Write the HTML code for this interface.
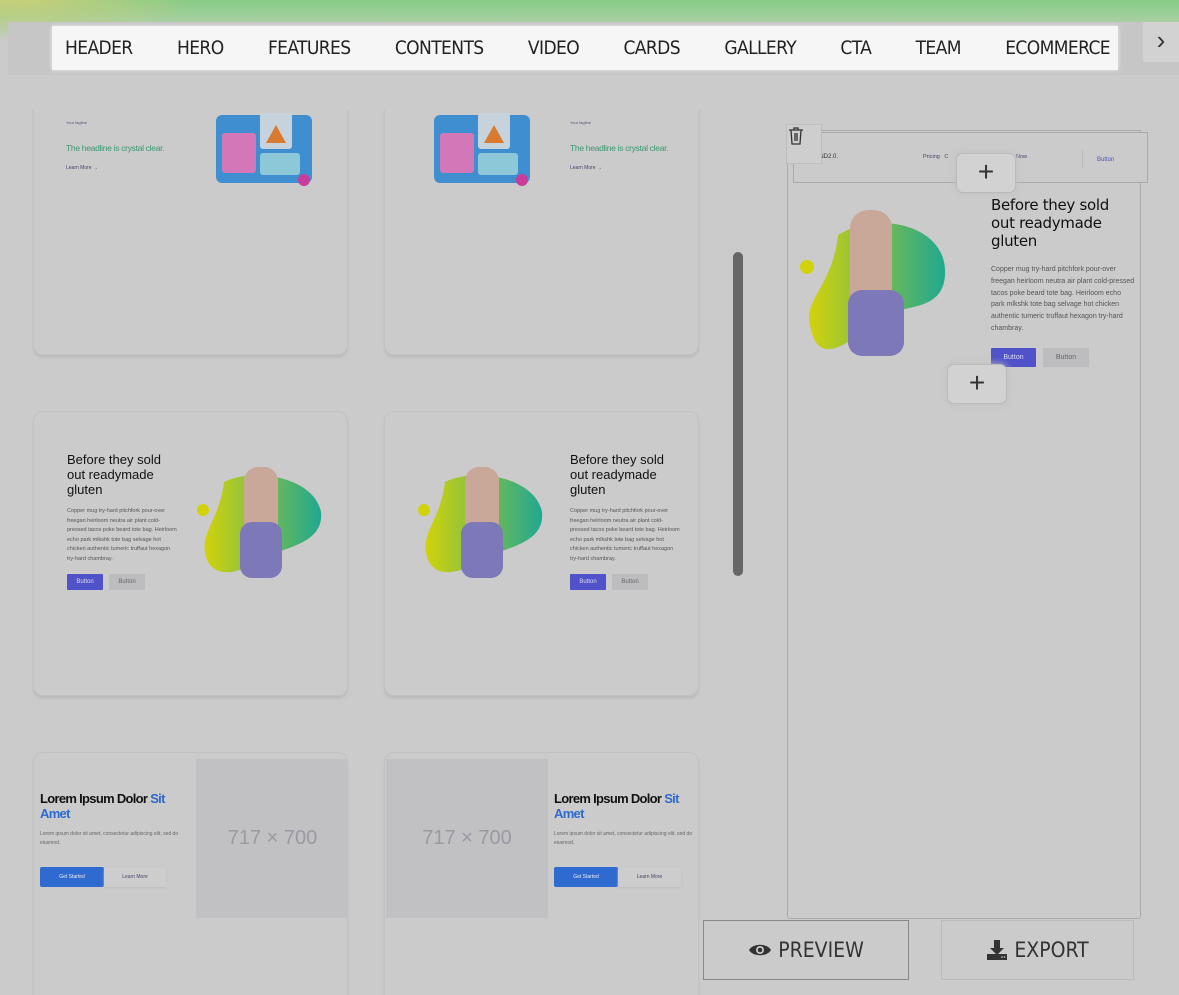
<!DOCTYPE html>
<html style="width:1179px;height:995px;overflow:hidden"><head><meta charset="utf-8"><style>
*{box-sizing:border-box;margin:0;padding:0}
body{width:1179px;height:995px;overflow:hidden;background:#cbcbcb;font-family:"Liberation Sans",sans-serif;position:relative}
.abs{position:absolute}
.top{left:0;top:0;width:1179px;height:40px;background:linear-gradient(180deg,#86cb86 0%,#9fcf9a 40%,#cbcbcb 100%)}
.topl{left:0;top:0;width:200px;height:40px;background:radial-gradient(ellipse at 10% 0%,#c8cf7a,rgba(200,207,122,0) 70%)}
.strip{left:8px;top:22px;width:1171px;height:53px;background:#c6c6c6}
.nav{left:52px;top:26px;width:1066px;height:44px;background:#f6f6f6;box-shadow:0 0 4px #eee;display:flex;align-items:center;justify-content:space-between;padding:0 8px 0 13px;font-size:19px;color:#222;font-family:"DejaVu Sans Condensed","Liberation Sans Narrow",sans-serif;letter-spacing:-0.6px}
.arrow{left:1143px;top:22px;width:36px;height:40px;background:#d2d2d2;color:#333;font-size:26px;text-align:center;line-height:36px}
.clip{left:0;top:110px;width:720px;height:885px;overflow:hidden}
.card{background:#cbcbcb;border:1px solid #c2c2c2;border-radius:10px;box-shadow:0 3px 2px #bdbdbd;overflow:hidden}
.h{color:#111;font-size:13px;line-height:15px}
.p{color:#555;font-size:5.5px;line-height:9.5px}
.btn1{background:#4f52c8;color:#dde;font-size:6px;text-align:center;line-height:16px;width:36px;height:16px;border-radius:1px}
.btn2{background:#bdbdc0;color:#666;font-size:6px;text-align:center;line-height:16px;width:36px;height:16px}
.ph{background:#c1c1c3;color:#999aa2;font-size:20px;display:flex;align-items:center;justify-content:center}
.plus{width:60px;height:40px;background:#d2d2d2;border:1px solid #bbb;border-radius:7px;box-shadow:0 0 8px #bfbfbf;text-align:center;line-height:36px;font-size:28px;color:#333;font-weight:300}
.bb{border:1px solid #888;font-size:21px;color:#333;display:flex;align-items:center;justify-content:center;gap:6px;font-family:"DejaVu Sans Condensed",sans-serif}
</style></head><body>
<div class="abs top"></div><div class="abs topl"></div>
<div class="abs strip"></div>
<div class="abs nav"><span>HEADER</span><span>HERO</span><span>FEATURES</span><span>CONTENTS</span><span>VIDEO</span><span>CARDS</span><span>GALLERY</span><span>CTA</span><span>TEAM</span><span>ECOMMERCE</span></div>
<div class="abs arrow">›</div>

<svg width="0" height="0" style="position:absolute"><defs><linearGradient id="g" x1="0" x2="1"><stop offset="0" stop-color="#d2d20a"/><stop offset="1" stop-color="#20a890"/></linearGradient></defs></svg>

<div class="abs clip">
<!-- row1 (offset -110) -->
<div class="abs card" style="left:33px;top:-50px;width:315px;height:295px">
 <div class="abs" style="left:32px;top:59px;font-size:4px;color:#557">Your tagline</div>
 <div class="abs" style="left:32px;top:82px;font-size:8.5px;color:#3a9a70;letter-spacing:-0.3px">The headline is crystal clear.</div>
 <div class="abs" style="left:32px;top:104px;font-size:5px;color:#446">Learn More →</div>
 <svg class="abs" style="left:168px;top:50px" width="112" height="80"><rect x="14" y="4" width="96" height="68" rx="6" fill="#3f8fd0"/><rect x="20" y="22" width="34" height="40" rx="3" fill="#d278b8"/><rect x="58" y="2" width="32" height="36" rx="3" fill="#c7d3dc"/><polygon points="64,32 74,14 84,32" fill="#d87a30"/><rect x="58" y="42" width="40" height="22" rx="3" fill="#8cc8d8"/><circle cx="102" cy="69" r="6" fill="#c83c9c"/></svg>
</div>
<div class="abs card" style="left:384px;top:-50px;width:315px;height:295px">
 <svg class="abs" style="left:35px;top:50px" width="112" height="80"><rect x="14" y="4" width="96" height="68" rx="6" fill="#3f8fd0"/><rect x="20" y="22" width="34" height="40" rx="3" fill="#d278b8"/><rect x="58" y="2" width="32" height="36" rx="3" fill="#c7d3dc"/><polygon points="64,32 74,14 84,32" fill="#d87a30"/><rect x="58" y="42" width="40" height="22" rx="3" fill="#8cc8d8"/><circle cx="102" cy="69" r="6" fill="#c83c9c"/></svg>
 <div class="abs" style="left:185px;top:59px;font-size:4px;color:#557">Your tagline</div>
 <div class="abs" style="left:185px;top:82px;font-size:8.5px;color:#3a9a70;letter-spacing:-0.3px">The headline is crystal clear.</div>
 <div class="abs" style="left:185px;top:104px;font-size:5px;color:#446">Learn More →</div>
</div>

<!-- row2 -->
<div class="abs card" style="left:33px;top:301px;width:315px;height:285px">
 <div class="abs h" style="left:33px;top:40px;width:110px">Before they sold out readymade gluten</div>
 <div class="abs p" style="left:33px;top:95px;width:112px">Copper mug try-hard pitchfork pour-over freegan heirloom neutra air plant cold-pressed tacos poke beard tote bag. Heirloom echo park mlkshk tote bag selvage hot chicken authentic tumeric truffaut hexagon try-hard chambray.</div>
 <div class="abs btn1" style="left:33px;top:162px">Button</div><div class="abs btn2" style="left:75px;top:162px">Button</div>
 <svg class="abs" style="left:160px;top:50px" width="130" height="120"><circle cx="9" cy="48" r="6" fill="#d2d20a"/><path d="M30 20 C60 5 120 15 127 50 C130 80 95 85 70 95 C50 110 20 120 12 95 C5 70 25 60 30 20Z" fill="url(#g)"/><rect x="50" y="5" width="34" height="80" rx="14" fill="#c9a89a"/><rect x="46" y="60" width="42" height="56" rx="12" fill="#7d78b8"/></svg>
</div>
<div class="abs card" style="left:384px;top:301px;width:315px;height:285px">
 <svg class="abs" style="left:30px;top:50px" width="130" height="120"><circle cx="9" cy="48" r="6" fill="#d2d20a"/><path d="M30 20 C60 5 120 15 127 50 C130 80 95 85 70 95 C50 110 20 120 12 95 C5 70 25 60 30 20Z" fill="url(#g)"/><rect x="50" y="5" width="34" height="80" rx="14" fill="#c9a89a"/><rect x="46" y="60" width="42" height="56" rx="12" fill="#7d78b8"/></svg>
 <div class="abs h" style="left:185px;top:40px;width:110px">Before they sold out readymade gluten</div>
 <div class="abs p" style="left:185px;top:95px;width:112px">Copper mug try-hard pitchfork pour-over freegan heirloom neutra air plant cold-pressed tacos poke beard tote bag. Heirloom echo park mlkshk tote bag selvage hot chicken authentic tumeric truffaut hexagon try-hard chambray.</div>
 <div class="abs btn1" style="left:185px;top:162px">Button</div><div class="abs btn2" style="left:227px;top:162px">Button</div>
</div>

<!-- row3 -->
<div class="abs card" style="left:33px;top:642px;width:315px;height:280px">
 <div class="abs" style="left:6px;top:38px;font-size:13px;font-weight:bold;color:#111;letter-spacing:-0.7px;width:150px;line-height:15px">Lorem Ipsum Dolor <span style="color:#2f6ad0">Sit Amet</span></div>
 <div class="abs" style="left:6px;top:77px;font-size:5px;color:#666;width:150px;line-height:9px">Lorem ipsum dolor sit amet, consectetur adipiscing elit, sed do eiusmod.</div>
 <div class="abs" style="left:6px;top:114px;width:64px;height:20px;background:#2f6ad0;border-radius:2px;color:#eee;font-size:5px;text-align:center;line-height:20px">Get Started</div>
 <div class="abs" style="left:70px;top:115px;width:62px;height:19px;background:#cdcdcd;box-shadow:0 1px 2px #bbb;color:#446;font-size:5px;text-align:center;line-height:19px">Learn More</div>
 <div class="abs ph" style="left:162px;top:6px;width:153px;height:159px">717 × 700</div>
</div>
<div class="abs card" style="left:384px;top:642px;width:315px;height:280px">
 <div class="abs ph" style="left:1px;top:6px;width:162px;height:159px">717 × 700</div>
 <div class="abs" style="left:169px;top:38px;font-size:13px;font-weight:bold;color:#111;letter-spacing:-0.7px;width:145px;line-height:15px">Lorem Ipsum Dolor <span style="color:#2f6ad0">Sit Amet</span></div>
 <div class="abs" style="left:169px;top:77px;font-size:5px;color:#666;width:145px;line-height:9px">Lorem ipsum dolor sit amet, consectetur adipiscing elit, sed do eiusmod.</div>
 <div class="abs" style="left:169px;top:114px;width:64px;height:20px;background:#2f6ad0;border-radius:2px;color:#eee;font-size:5px;text-align:center;line-height:20px">Get Started</div>
 <div class="abs" style="left:233px;top:115px;width:63px;height:19px;background:#cdcdcd;box-shadow:0 1px 2px #bbb;color:#446;font-size:5px;text-align:center;line-height:19px">Learn More</div>
</div>
</div>

<!-- scrollbar -->
<div class="abs" style="left:733px;top:252px;width:10px;height:324px;background:#666;border-radius:5px"></div>

<!-- right panel -->
<div class="abs" style="left:787px;top:130px;width:354px;height:789px;border:1px solid #aaa;border-radius:0 0 3px 3px"></div>
<div class="abs" style="left:793px;top:132px;width:355px;height:51px;border:1px solid #aaa;background:#cbcbcb"></div>
<div class="abs" style="left:812px;top:154px;font-size:6px;color:#333">WIND2.0.</div>
<div class="abs" style="left:923px;top:154px;font-size:5.5px;color:#446">Pricing &nbsp; C</div>
<div class="abs" style="left:1016px;top:154px;font-size:5.5px;color:#446">Now</div>
<div class="abs" style="left:1082px;top:150px;width:0;height:18px;border-left:1px solid #bbb"></div>
<div class="abs" style="left:1097px;top:157px;font-size:6px;color:#4f52c8">Button</div>
<div class="abs" style="left:786px;top:124px;width:36px;height:40px;border:1px solid #bdbdbd;background:#cecece"><svg width="16" height="18" style="margin:2px 0 0 1px" viewBox="0 0 16 18"><path d="M1 3h14M6 3V1h4v2M3 3l1 14h8l1-14M7 6v8M9 6v8" fill="none" stroke="#333" stroke-width="1.3"/></svg></div>
<div class="abs plus" style="left:956px;top:153px">+</div>
<div class="abs" style="left:991px;top:196px;font-size:15px;line-height:18px;color:#111;width:140px;font-family:'DejaVu Sans',sans-serif;letter-spacing:-0.3px">Before they sold out readymade gluten</div>
<div class="abs" style="left:991px;top:264px;font-size:7px;line-height:11.8px;color:#555;width:145px">Copper mug try-hard pitchfork pour-over freegan heirloom neutra air plant cold-pressed tacos poke beard tote bag. Heirloom echo park mlkshk tote bag selvage hot chicken authentic tumeric truffaut hexagon try-hard chambray.</div>
<div class="abs btn1" style="left:991px;top:348px;width:45px;height:19px;line-height:19px;font-size:7px">Button</div>
<div class="abs btn2" style="left:1043px;top:348px;width:46px;height:19px;line-height:19px;font-size:7px">Button</div>
<svg class="abs" style="left:798px;top:205px" width="160" height="160"><circle cx="9" cy="62" r="7" fill="#d2d20a"/><path d="M40 30 C80 5 150 20 147 70 C145 105 110 100 85 110 C60 130 20 170 12 120 C5 95 35 80 40 30Z" fill="url(#g)"/><rect x="52" y="5" width="42" height="110" rx="18" fill="#c9a89a"/><rect x="50" y="85" width="56" height="66" rx="14" fill="#7d78b8"/></svg>
<div class="abs plus" style="left:947px;top:364px">+</div>

<div class="abs bb" style="left:703px;top:920px;width:206px;height:60px"><svg width="24" height="16" viewBox="0 0 24 16"><path d="M1 8C5 1 19 1 23 8C19 15 5 15 1 8Z" fill="#333"/><circle cx="12" cy="8" r="4" fill="#cbcbcb"/><circle cx="12" cy="8" r="2.3" fill="#333"/></svg>PREVIEW</div>
<div class="abs bb" style="left:941px;top:920px;width:193px;height:60px;border-color:#bbb"><svg width="22" height="22" viewBox="0 0 22 22"><path d="M8 1h6v8h4l-7 7-7-7h4z" fill="#333"/><rect x="1" y="15" width="20" height="6" fill="#333"/><circle cx="16" cy="18" r=".8" fill="#ccc"/><circle cx="18.5" cy="18" r=".8" fill="#ccc"/></svg>EXPORT</div>
</body></html>
